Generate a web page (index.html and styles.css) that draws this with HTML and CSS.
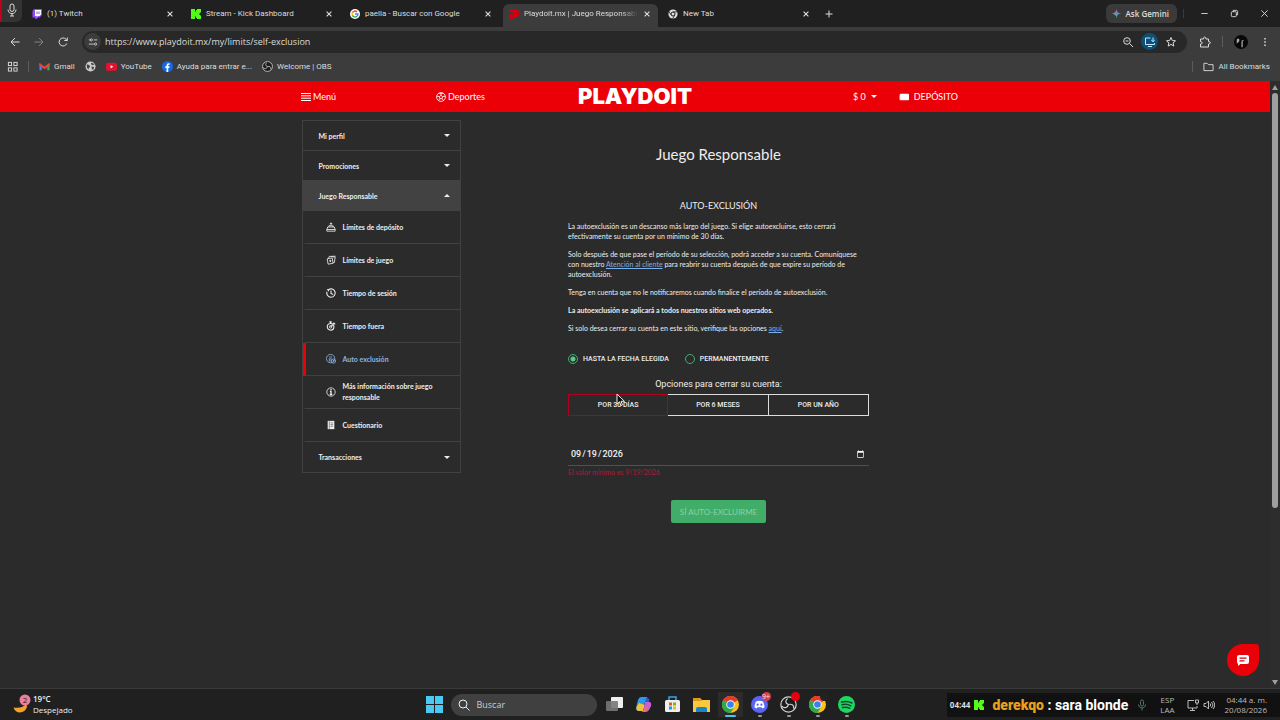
FILE: index.html
```
<!DOCTYPE html>
<html lang="es">
<head>
  <meta charset="UTF-8">
  <meta name="viewport" content="width=device-width, initial-scale=1.0">
  <title>Playdoit.mx | Juego Responsable</title>
  <link rel="stylesheet" href="styles.css">
</head>
<body>

  <!-- Iconos compartidos -->
  <svg class="sprite" aria-hidden="true">
    <symbol id="i-close" viewBox="0 0 10 10"><path d="M2 2l6 6M8 2l-6 6" stroke="currentColor" stroke-width="1.4" fill="none"/></symbol>
    <symbol id="i-kick" viewBox="0 0 10 10"><path d="M0 0h4v2.500h1V1h1V0h4v3.500H9v1H8v1h1v1h1V10H6V9H5V7.500H4V10H0z" fill="#53fc18"/></symbol>
    <symbol id="i-chrome" viewBox="0 0 20 20"><circle cx="10" cy="10" r="10" fill="#fbc116"/><path d="M10 10L1.300 5A10 10 0 0 1 18.700 5z" fill="#e33b2e"/><path d="M10 10L1.300 5A10 10 0 0 0 10 20l4.500-7.500z" fill="#2da94f"/><circle cx="10" cy="10" r="5" fill="#fff"/><circle cx="10" cy="10" r="3.900" fill="#3c80f0"/></symbol>
    <symbol id="i-obs" viewBox="0 0 20 20"><circle cx="10" cy="10" r="9" fill="#1c1c1c" stroke="#d0d0d0" stroke-width="1.500"/><path d="M9 3c-3 2-3 6 1 7 4-1 7 1 6 5M10 10c-1 4-5 5-8 2" fill="none" stroke="#d0d0d0" stroke-width="1.400"/></symbol>
  </svg>

  <header class="browser">
    <div class="tabstrip">
      <button class="tab-search" aria-label="Buscar pestañas">
        <svg viewBox="0 0 12 14"><rect x="4" y="1" width="4" height="7.500" rx="2"/><path d="M2 6.500c0 5.500 8 5.500 8 0M6 10.500v2.500M4 13h4"/></svg>
      </button>
      <div class="tab">
        <svg class="favicon" viewBox="0 0 10 10"><path d="M2 0h8v6L7.500 8.500H6L4.500 10H3V8.500H.500V2z" fill="#9146ff"/><path d="M3 1h6v4.500L7.500 7H6L4.700 8V7H3z" fill="#fff"/><path d="M5 2.500v2.500M7 2.500v2.500" stroke="#9146ff"/></svg>
        <a href="#" class="tab-title">(1) Twitch</a>
        <button class="tab-close" aria-label="Cerrar"><svg><use href="#i-close"/></svg></button>
      </div>
      <div class="tab">
        <svg class="favicon"><use href="#i-kick"/></svg>
        <a href="#" class="tab-title">Stream - Kick Dashboard</a>
        <button class="tab-close" aria-label="Cerrar"><svg><use href="#i-close"/></svg></button>
      </div>
      <div class="tab">
        <svg class="favicon" viewBox="0 0 12 12"><circle cx="6" cy="6" r="6" fill="#fff"/><g fill="none" stroke-width="1.700"><path d="M2.900 4.400A3.500 3.500 0 0 1 8.500 3.500" stroke="#ea4335"/><path d="M2.900 7.600a3.500 3.500 0 0 1 0-3.200" stroke="#fbbc05"/><path d="M8.400 8.600a3.500 3.500 0 0 1-5.500-1" stroke="#34a853"/><path d="M6 6h3.500a3.500 3.500 0 0 1-1.100 2.600" stroke="#4285f4"/></g></svg>
        <a href="#" class="tab-title">paella - Buscar con Google</a>
        <button class="tab-close" aria-label="Cerrar"><svg><use href="#i-close"/></svg></button>
      </div>
      <div class="tab tab-active">
        <svg class="favicon" viewBox="0 0 10 10"><path d="M0 0h7l3 2v4L8 8H5v2H0V4h2v4l1.500-1V3H0z" fill="#d00010"/></svg>
        <a href="#" class="tab-title">Playdoit.mx | Juego Responsabl</a>
        <button class="tab-close" aria-label="Cerrar"><svg><use href="#i-close"/></svg></button>
      </div>
      <div class="tab">
        <svg class="favicon" viewBox="0 0 12 12"><circle cx="6" cy="6" r="5.500" fill="#ddd"/><circle cx="6" cy="6" r="2.400" fill="#ddd" stroke="#222" stroke-width="1.200"/><path d="M6 3.500h5M3.800 7.200L1.200 3M8.200 7.200L5.600 11.500" stroke="#222"/></svg>
        <a href="#" class="tab-title">New Tab</a>
        <button class="tab-close" aria-label="Cerrar"><svg><use href="#i-close"/></svg></button>
      </div>
      <button class="new-tab" aria-label="Nueva pestaña"><svg viewBox="0 0 10 10"><path d="M5 1.500v7M1.500 5h7"/></svg></button>
      <button class="gemini">
        <svg viewBox="0 0 12 12"><path d="M6 0Q6.500 5.500 12 6 6.500 6.500 6 12 5.500 6.500 0 6 5.500 5.500 6 0z" fill="#4a8cf5"/><path d="M6 0Q5.500 5.500 0 6h6z" fill="#f0504a"/><path d="M0 6q5.500.500 6 6V6z" fill="#56b96a"/></svg>
        Ask Gemini
      </button>
      <div class="window-buttons">
        <button aria-label="Minimizar"><svg viewBox="0 0 10 10"><path d="M1.500 5h7"/></svg></button>
        <button aria-label="Restaurar"><svg viewBox="0 0 10 10"><rect x="1.500" y="3" width="5.500" height="5.500" rx="1"/><path d="M3.500 3V1.500H7Q8.500 1.500 8.500 3v3.500H7"/></svg></button>
        <button aria-label="Cerrar ventana"><svg viewBox="0 0 10 10"><path d="M1.500 1.500l7 7M8.500 1.500l-7 7"/></svg></button>
      </div>
    </div>

    <div class="toolbar">
      <div class="nav-buttons">
        <button aria-label="Atrás"><svg viewBox="0 0 12 12"><path d="M10.500 6H2M6 2L2 6l4 4"/></svg></button>
        <button class="dim" aria-label="Adelante"><svg viewBox="0 0 12 12"><path d="M1.500 6H10M6 2l4 4-4 4"/></svg></button>
        <button aria-label="Recargar"><svg viewBox="0 0 12 12"><path d="M9.800 7.500A4 4 0 1 1 9 3.200L10.200 4.500M10.300 1.500v3h-3"/></svg></button>
      </div>
      <div class="urlbar">
        <span class="site-info"><svg viewBox="0 0 12 12"><path d="M1 3.500h2M7 8.500H1M11 3.500H7"/><circle cx="4" cy="3.500" r="1.300"/><circle cx="9" cy="8.500" r="1.300"/></svg></span>
        <input type="text" aria-label="Dirección" value="https://www.playdoit.mx/my/limits/self-exclusion">
        <svg viewBox="0 0 12 12"><circle cx="5" cy="5" r="3.300"/><path d="M7.500 7.500l3.500 3.500M3.500 5h3"/></svg>
        <span class="install"><svg viewBox="0 0 12 12"><path d="M6.500 2H1.500v6.500h9V7M4 10.500h4M9 1.500v4M7.200 4L9 5.700 10.800 4"/></svg></span>
        <svg viewBox="0 0 12 12"><path d="M6 1.500l1.300 3 3.200.300-2.400 2.100.700 3.200L6 8.400l-2.800 1.700.700-3.200L1.500 4.800l3.200-.300z"/></svg>
      </div>
      <div class="toolbar-end">
        <button aria-label="Extensiones"><svg viewBox="0 0 12 12"><path d="M1.500 3H4.500Q4.500 1 5.700 1T7 3H9.500V5.500Q11.300 5.500 11.300 6.700T9.500 8V11H1.500V8Q3.200 8 3.200 6.800T1.500 5.600z"/></svg></button>
        <span class="divider"></span>
        <span class="avatar"><svg viewBox="0 0 14 14"><path d="M8 5h3l-2 1v7H7.500V7zM2 4q2-2 3 0v2L2 9z" fill="#aaa"/></svg></span>
        <button aria-label="Más"><svg viewBox="0 0 12 12"><path d="M6 2v1.500M6 5.300v1.500M6 8.500V10" stroke-width="1.500"/></svg></button>
      </div>
    </div>

    <nav class="bookmarks">
      <a href="#" aria-label="Aplicaciones"><svg viewBox="0 0 12 12"><rect x="1.500" y="1.500" width="3.500" height="3.500"/><rect x="7.500" y="1.500" width="3.500" height="3.500"/><rect x="1.500" y="7.500" width="3.500" height="3.500"/><rect x="7.500" y="7.500" width="3.500" height="3.500"/></svg></a>
      <span class="divider"></span>
      <a href="#"><svg viewBox="0 0 12 12"><path d="M.500 2.500V10H3V5z" fill="#4285f4"/><path d="M11.500 2.500V10H9V5z" fill="#34a853"/><path d="M.500 2L6 6l5.500-4v3L6 9 .500 5z" fill="#ea4335"/></svg>Gmail</a>
      <a href="#" aria-label="Web"><svg viewBox="0 0 12 12"><circle cx="6" cy="6" r="5.500" fill="#ccc"/><path d="M2 3.500l3 1 .5 2-1.500 1v2L2 7zM7 1.500l-.5 2 2 1 2-1M7 6l3 .500-1 3-1.500-.500z" fill="#444"/></svg></a>
      <a href="#"><svg viewBox="0 0 12 12"><rect y="2" width="12" height="8.500" rx="2" fill="#e8112d"/><path d="M5 4.500v3.500l3-1.800z" fill="#fff"/></svg>YouTube</a>
      <a href="#"><svg viewBox="0 0 12 12"><circle cx="6" cy="6" r="6" fill="#1668e3"/><path d="M5 12V7.500H3.600V5.800H5V4.600Q5 2.500 7 2.500h1.300V4H7.500Q6.800 4 6.800 4.800v1h1.500L8 7.500H6.800V12z" fill="#fff"/></svg>Ayuda para entrar e...</a>
      <a href="#"><svg><use href="#i-obs"/></svg>Welcome | OBS</a>
      <span class="divider push"></span>
      <a href="#"><svg viewBox="0 0 12 12"><path d="M1 2.500h3.500L6 4h5v6.500H1z"/></svg>All Bookmarks</a>
    </nav>
  </header>

  <div class="viewport">
    <div class="page">
      <header class="site-header">
        <div class="site-header-inner">
          <nav class="header-left">
            <a href="#"><svg viewBox="0 0 10 10"><path d="M0 1.500h10M0 3.800h10M0 6.200h10M0 8.500h10"/></svg>Menú</a>
            <a href="#"><svg viewBox="0 0 12 12"><circle cx="6" cy="6" r="5.300"/><path d="M6 4l2 1.500-.700 2.500H4.700L4 5.500zM6 4V2L3.500 1.500M6 2l2.500-.500M4 5.500L1 5M8 5.500L11 5M4.700 8L3 10.300M7.300 8L9 10.300"/></svg>Deportes</a>
          </nav>
          <a href="#" class="logo">PLAYDOIT</a>
          <div class="header-right">
            <button>$ 0 <span class="caret"></span></button>
            <a href="#"><svg viewBox="0 0 12 12"><rect x="1" y="2" width="11" height="8" rx="1" fill="#fff"/><path d="M1 4v5" stroke="#ffb0b0"/></svg>DEPÓSITO</a>
          </div>
        </div>
      </header>

      <div class="content">
        <nav class="sidebar">
          <button class="group">Mi perfil <span class="caret"></span></button>
          <button class="group">Promociones <span class="caret"></span></button>
          <button class="group group-open">Juego Responsable <span class="caret caret-up"></span></button>
          <a href="#"><svg viewBox="0 0 12 12"><path d="M1 9l1-3h8l1 3v2H1zM1 9h10M3.500 6V4.500h5V6M6 1v3M4.500 2.500L6 1l1.500 1.500"/></svg>Límites de depósito</a>
          <a href="#"><svg viewBox="0 0 12 12"><path d="M1.500 4.500l6-1 1 6.500-6 1zM3 4l1-2.500 7 1-1 6.500H8.500M6.500 1.500h5"/><path d="M5 5.500L6.500 7 5.300 8.800 3.800 7.300z" fill="currentColor"/></svg>Límites de juego</a>
          <a href="#"><svg viewBox="0 0 12 12"><path d="M3 2A5 5 0 1 1 1.200 4.500M3 2H1M3 2v2M6 3v3.500l2.500 1.200" stroke-width="1.300"/></svg>Tiempo de sesión</a>
          <a href="#"><svg viewBox="0 0 12 12"><circle cx="5.500" cy="7" r="4" stroke-width="1.300"/><circle cx="5.500" cy="7" r="1.500"/><path d="M5.500 7L8 4.500M4 1h3M5.500 1v2M9 2l2 2M8.500 3.500l1-1" stroke-width="1.300"/></svg>Tiempo fuera</a>
          <a href="#" class="current"><svg viewBox="0 0 12 12"><circle cx="5.500" cy="5.500" r="5"/><path d="M4 9V5M4 3v1M6 2.500V9"/><circle cx="9" cy="8.500" r="2.500"/><path d="M9 7.200v1.300h1.200"/></svg>Auto exclusión</a>
          <a href="#"><svg viewBox="0 0 12 12"><circle cx="6" cy="6" r="5"/><path d="M6 2.500v1.300M4.700 5.200H6v3.600M4.500 9h3" stroke-width="1.600"/></svg>Más información sobre juego responsable</a>
          <a href="#"><svg viewBox="0 0 12 12"><path d="M2 1h8v10H2z" fill="currentColor"/><path d="M4 1.500v9M5.500 3.500h3M5.500 5.500h3M5.500 7.500h3" stroke="#2b2b2b" stroke-width=".6"/></svg>Cuestionario</a>
          <button class="group">Transacciones <span class="caret"></span></button>
        </nav>

        <main class="main">
          <h1>Juego Responsable</h1>
          <section class="exclusion">
            <h2>AUTO-EXCLUSIÓN</h2>
            <p>La autoexclusión es un descanso más largo del juego. Si elige autoexcluirse, esto cerrará<br>efectivamente su cuenta por un mínimo de 30 días.</p>
            <p>Solo después de que pase el período de su selección, podrá acceder a su cuenta. Comuníquese<br>con nuestro <a href="#">Atención al cliente</a> para reabrir su cuenta después de que expire su período de<br>autoexclusión.</p>
            <p>Tenga en cuenta que no le notificaremos cuando finalice el período de autoexclusión.</p>
            <p><strong>La autoexclusión se aplicará a todos nuestros sitios web operados.</strong></p>
            <p>Si solo desea cerrar su cuenta en este sitio, verifique las opciones <a href="#">aquí</a>.</p>

            <form>
              <div class="radios">
                <label><input type="radio" name="tipo" checked>HASTA LA FECHA ELEGIDA</label>
                <label><input type="radio" name="tipo">PERMANENTEMENTE</label>
              </div>
              <label class="options-label" for="fecha">Opciones para cerrar su cuenta:</label>
              <div class="options">
                <button type="button" class="selected">POR 30 DÍAS
                  <svg class="cursor" viewBox="0 0 10 14"><path d="M1 1v10l2.500-2.200L5 12.500l1.500-.700L5 8.300h3.500z" fill="#111" stroke="#eee"/></svg>
                </button>
                <button type="button">POR 6 MESES</button>
                <button type="button">POR UN AÑO</button>
              </div>
              <input type="date" id="fecha" value="2026-09-19">
              <div class="error">El valor mínimo es 9/19/2026</div>
              <button type="button" class="submit">SÍ AUTO-EXCLUIRME</button>
            </form>
          </section>
        </main>
      </div>

      <button class="chat" aria-label="Chat"><svg viewBox="0 0 14 12"><rect x="1" y="1" width="12" height="9" rx="2" fill="#fff"/><path d="M2 8v4l3-2.500z" fill="#fff"/><path d="M3.500 4.200h7M3.500 6.800h5" stroke="#d00010" stroke-width="1.200"/></svg></button>
    </div>

    <div class="scrollbar">
      <span class="arrow arrow-up"></span>
      <div class="track"><div class="thumb"></div></div>
      <span class="arrow"></span>
    </div>
  </div>

  <footer class="taskbar">
    <div class="weather">
      <svg viewBox="0 0 18 20"><path d="M13 9.500c-2 4-7 5-12.500 4 2 7 12 6.500 13.500-1z" fill="#f5a130"/><circle cx="12" cy="6" r="5.500" fill="#ec7f98"/><text x="12" y="9" text-anchor="middle">2</text></svg>
      <div><b>19°C</b><br>Despejado</div>
    </div>

    <div class="apps">
      <svg viewBox="0 0 17 17" role="img" aria-label="Inicio"><path d="M0 0h8v8H0zM9 0h8v8H9zM0 9h8v8H0zM9 9h8v8H9z" fill="#4cc8f5"/></svg>
      <label class="search"><svg viewBox="0 0 12 12"><circle cx="5" cy="5" r="4"/><path d="M8 8l3.500 3.500"/></svg><input type="text" placeholder="Buscar" aria-label="Buscar"></label>
      <svg viewBox="0 0 17 17"><rect x="5" y="1" width="12" height="11" rx="1" fill="#eee"/><rect x="0" y="5" width="12" height="10" rx="1" fill="#777" fill-opacity=".9"/></svg>
      <svg viewBox="0 0 17 17"><path d="M6 1h6l2 5h-4L7 15H4Q1 15 1 12L3 4Q4 1 6 1z" fill="#2b9be8"/><path d="M4 7L1.500 11Q1 15 4 15h4l2-6z" fill="#f0c23c"/><path d="M11 2h2q2 1 1 4h-4l1-4z" fill="#3257d8"/><path d="M10 6h4q3 0 2 4l-2 4q-1 2-4 2H6q2 0 3-4z" fill="#c95fd0"/><path d="M13 10l-2 6H7q2-1 3-4z" fill="#f0705a"/></svg>
      <svg viewBox="0 0 17 17"><path d="M5 4V1h7v3" fill="none" stroke="#35a5e5" stroke-width="1.500"/><rect x="1" y="4" width="15" height="12" rx="1.500" fill="#eee"/><path d="M5 6.500h3v3H5z" fill="#f25022"/><path d="M9 6.500h3v3H9z" fill="#7fba00"/><path d="M5 10.500h3v3H5z" fill="#00a4ef"/><path d="M9 10.500h3v3H9z" fill="#ffb900"/></svg>
      <svg viewBox="0 0 17 17"><path d="M0 2h7l2 2h8v12H0z" fill="#fbc93d"/><path d="M0 2h7l2 3H0z" fill="#d99a1d"/><path d="M3 16v-3q0-2 2-2h7q2 0 2 2v3z" fill="#1b84c9"/></svg>
      <span class="app app-active"><svg><use href="#i-chrome"/></svg></span>
      <span class="app"><svg viewBox="0 0 17 17"><circle cx="8.500" cy="8.500" r="8.500" fill="#5865f2"/><path d="M5 5.500q3.500-1.500 7 0 1.500 3 1.500 6l-2.200 1-.800-1.200h-4L5.700 12.500l-2.200-1q0-3 1.500-6z" fill="#fff"/><circle cx="6.600" cy="8.700" r="1.100" fill="#5865f2"/><circle cx="10.400" cy="8.700" r="1.100" fill="#5865f2"/></svg><span class="badge">9+</span></span>
      <span class="app"><svg><use href="#i-obs"/></svg><span class="badge badge-dot"></span></span>
      <span class="app"><svg><use href="#i-chrome"/></svg><span class="badge badge-user"></span></span>
      <span class="app"><svg viewBox="0 0 17 17"><circle cx="8.500" cy="8.500" r="8.500" fill="#1ed760"/><path d="M3.500 6q5.500-1.500 10.500 1M4 8.800q4.500-1.300 8.800 1M4.500 11.500q4-1 7.300.800" fill="none" stroke="#143" stroke-width="1.500" stroke-linecap="round"/></svg></span>
    </div>

    <div class="tray">
      <span class="chat-time">04:44</span>
      <svg class="kick"><use href="#i-kick"/></svg>
      <span class="chat-line"><b>derekqo</b> : sara blonde</span>
      <svg class="mic" viewBox="0 0 12 12"><rect x="4.500" y="1" width="3" height="6" rx="1.500"/><path d="M2.500 5.500c0 4.500 7 4.500 7 0M6 9v2.500"/></svg>
      <span class="lang">ESP<br>LAA</span>
      <svg viewBox="0 0 12 12"><path d="M7 1.500H1v7.500h9V7M3 11.500h5M5.500 9v2.500M8.500 1h3v3h-3zM10 4v2"/></svg>
      <svg viewBox="0 0 12 12"><path d="M1 4.500v3h2L5.500 10V2L3 4.500zM7 4.500q1.500 1.500 0 3M8.500 3q3 3 0 6M10 2q3.500 4 0 8"/></svg>
      <span class="clock">04:44 a. m.<br>20/08/2026</span>
    </div>
  </footer>

</body>
</html>
```

FILE: styles.css
```
* {
  box-sizing: border-box;
}

body {
  margin: 0;
  height: 100vh;
  display: flex;
  flex-direction: column;
  background-color: #2b2b2b;
  color: #eee;
  font-family: "Open Sans", sans-serif;
  font-size: 8px;
  overflow: hidden;
}

button, input {
  font: inherit;
  color: inherit;
  background: none;
  border: none;
  padding: 0;
  margin: 0;
}

a {
  color: inherit;
  text-decoration: none;
}

svg {
  width: 12px;
  height: 12px;
  flex: none;
  fill: none;
  stroke: currentColor;
  stroke-width: 1;
}

svg path[fill]:not([stroke]),
svg rect[fill]:not([stroke]),
svg circle[fill]:not([stroke]),
svg text {
  stroke: none;
}

.sprite {
  display: none;
}

/* Navegador */
.browser {
  background-color: #3c3c3c;
  color: #dcdcdc;
  font-family: "Roboto", sans-serif;
}

.tabstrip {
  display: flex;
  align-items: center;
  height: 27px;
  background-color: #202020;
}

.tab-search {
  align-self: stretch;
  width: 22px;
  margin-right: 4px;
  margin-bottom: 5px;
  border-left: 2px solid #c00018;
  border-radius: 0 0 6px 0;
  background-color: #333;
}

.tab-search svg {
  width: 14px;
  height: 14px;
}

.tab {
  display: flex;
  align-items: center;
  width: 159px;
  padding: 0 11px 0 6px;
  gap: 5px;
}

.favicon {
  width: 10px;
  height: 10px;
}

.tab-title {
  flex: 1;
  overflow: hidden;
  white-space: nowrap;
}

.tab-close svg {
  display: block;
  width: 8px;
  height: 8px;
}

.tab-active {
  align-self: flex-end;
  width: 155px;
  height: 23px;
  margin-right: 4px;
  padding-right: 7px;
  padding-bottom: 4px;
  border-radius: 6px 6px 0 0;
  background-color: #3c3c3c;
}

.tab-active .tab-title {
  mask-image: linear-gradient(to right, #000 85%, transparent);
}

.new-tab {
  margin-left: 3px;
}

.new-tab svg {
  display: block;
  width: 10px;
  height: 10px;
}

.gemini {
  display: flex;
  align-items: center;
  gap: 5px;
  height: 19px;
  margin-left: auto;
  padding: 0 8px 0 6px;
  border-radius: 6px;
  background-color: #3a3a3a;
  font-family: "Open Sans", sans-serif;
  font-weight: 600;
}

.gemini svg {
  width: 9px;
  height: 9px;
}

.window-buttons {
  display: flex;
  gap: 21px;
  margin-left: 6px;
  padding: 0 11px 0 16px;
  border-left: 1px solid #3a3a3a;
}

.window-buttons svg {
  display: block;
  width: 9px;
  height: 9px;
}

.toolbar {
  display: flex;
  align-items: center;
  height: 29px;
  padding: 0 9px;
}

.nav-buttons {
  display: flex;
  gap: 12px;
  width: 73px;
}

.toolbar svg {
  display: block;
}

.dim {
  color: #808080;
}

.urlbar {
  flex: 1;
  display: flex;
  align-items: center;
  gap: 7px;
  height: 22px;
  padding: 0 10px 0 2px;
  border-radius: 11px;
  background-color: #282828;
}

.urlbar input {
  flex: 1;
  margin-left: -3px;
  font-family: "Open Sans", sans-serif;
  font-size: 9px;
  outline: none;
}

.site-info, .install, .avatar {
  display: flex;
  align-items: center;
  justify-content: center;
  width: 17px;
  height: 17px;
  border-radius: 50%;
  background-color: #3c3c3c;
}

.site-info svg {
  width: 10px;
  height: 10px;
}

.install {
  background-color: #0c5078;
  color: #c2e7ff;
}

.toolbar-end {
  display: flex;
  align-items: center;
  gap: 11px;
  padding-left: 12px;
}

.avatar {
  width: 14px;
  height: 14px;
  background-color: #080808;
}

.divider {
  width: 1px;
  height: 11px;
  background-color: #5c5c5c;
}

.bookmarks {
  display: flex;
  align-items: center;
  gap: 10px;
  height: 25px;
  padding: 0 10px 5px 7px;
}

.bookmarks a {
  display: flex;
  align-items: center;
  gap: 4px;
}

.bookmarks svg {
  width: 11px;
  height: 11px;
}

.push {
  margin-left: auto;
}

/* Página */
.viewport {
  flex: 1;
  display: flex;
  min-height: 0;
}

.page {
  flex: 1;
  position: relative;
  font-family: "Lato", sans-serif;
}

.site-header {
  background-color: #ec0008;
  color: #fff;
  font-size: 9px;
}

.site-header-inner {
  display: grid;
  grid-template-columns: 1fr auto 1fr;
  align-items: center;
  max-width: 668px;
  height: 31px;
  margin: 0 auto;
}

.header-left, .header-right, .site-header a, .site-header button {
  display: flex;
  align-items: center;
}

.header-left {
  gap: 100px;
}

.header-left a {
  gap: 2px;
}

.header-left svg, .header-right svg {
  width: 10px;
  height: 10px;
}

.header-right {
  justify-content: flex-end;
  gap: 22px;
  padding-right: 11px;
}

.header-right a, .header-right button {
  gap: 5px;
}

.site-header .logo {
  font-family: "Inter", sans-serif;
  font-size: 22px;
  font-weight: 900;
  line-height: 31px;
}

.caret {
  border: 3px solid transparent;
  border-top-color: currentColor;
  border-bottom: none;
}

.caret-up {
  border-top: none;
  border-bottom: 3px solid currentColor;
}

.content {
  display: grid;
  grid-template-columns: 159px 1fr;
  gap: 8px;
  align-items: start;
  max-width: 667px;
  margin: 0 auto;
  padding-top: 8px;
}

.sidebar {
  border: 1px solid #414141;
  font-size: 7px;
  font-weight: bold;
}

.sidebar .group {
  display: flex;
  align-items: center;
  justify-content: space-between;
  width: 100%;
  height: 30px;
  padding: 0 10px 0 16px;
  border-bottom: 1px solid #414141;
}

.sidebar .group:last-child {
  border-bottom: none;
}

.sidebar .group-open {
  background-color: #424242;
}

.sidebar a {
  display: flex;
  align-items: center;
  gap: 7px;
  height: 33px;
  padding: 0 16px 0 20px;
  border-left: 3px solid transparent;
  border-bottom: 1px solid #414141;
  line-height: 11px;
}

.sidebar svg {
  width: 10px;
  height: 10px;
}

.sidebar .current {
  border-left-color: #ec0008;
  color: #8ab4e8;
}

.main {
  padding-top: 24px;
}

h1, h2, p {
  margin: 0;
}

h1 {
  font-size: 15px;
  font-weight: normal;
  line-height: 20px;
  text-align: center;
}

.exclusion {
  max-width: 301px;
  margin: 35px auto 0;
}

h2 {
  margin-bottom: 8px;
  font-size: 9px;
  font-weight: normal;
  line-height: 14px;
  text-align: center;
}

p {
  margin-bottom: 8px;
  font-size: 7px;
  line-height: 10px;
  white-space: nowrap;
}

p a {
  color: #7eb0e8;
  text-decoration: underline;
}

form {
  padding-top: 13px;
  font-family: "Roboto", sans-serif;
  text-align: center;
}

.radios {
  display: flex;
  gap: 16px;
  font-size: 7px;
  font-weight: 500;
}

.radios label {
  display: flex;
  align-items: center;
  gap: 5px;
}

.radios input {
  appearance: none;
  width: 10px;
  height: 10px;
  border: 1px solid #3fb06e;
  border-radius: 50%;
}

.radios input:checked {
  background: radial-gradient(#5cc98a 0 2px, transparent 3px);
}

.options-label {
  display: block;
  margin: 15px 0 4px;
  font-size: 9px;
  line-height: 11px;
}

.options {
  display: grid;
  grid-template-columns: repeat(3, 1fr);
}

.options button {
  position: relative;
  height: 22px;
  border: 1px solid #ddd;
  border-left: none;
  font-size: 7px;
  font-weight: 500;
}

.options .selected {
  border: 1px solid #b00020;
}

.cursor {
  position: absolute;
  left: 47px;
  top: -2px;
  width: 10px;
  height: 14px;
}

input[type="date"] {
  display: block;
  width: 100%;
  height: 23px;
  margin-top: 27px;
  padding: 0 2px;
  border-bottom: 1px solid #c4183f;
  font-size: 9px;
  font-weight: 500;
  color-scheme: dark;
}

.error {
  margin-top: 2px;
  color: #b0183c;
  font-family: "Lato", sans-serif;
  font-size: 7px;
  line-height: 8px;
  text-align: left;
}

.submit {
  height: 23px;
  margin-top: 24px;
  padding: 0 9px;
  border-radius: 2px;
  background-color: #40ad69;
  color: #8fcfa8;
  font-family: "Lato", sans-serif;
  font-size: 8px;
}

.chat {
  position: absolute;
  right: 11px;
  bottom: 12px;
  width: 32px;
  height: 32px;
  border-radius: 50% 3px 50% 50%;
  background-color: #ea0008;
}

.chat svg {
  display: block;
  width: 14px;
  margin: 0 auto;
}

.scrollbar {
  display: flex;
  flex-direction: column;
  align-items: center;
  gap: 3px;
  width: 10px;
  padding: 4px 0 3px;
  background-color: #2d2d2d;
}

.track {
  flex: 1;
  width: 6px;
}

.thumb {
  height: 71%;
  border-radius: 3px;
  background-color: #9f9f9f;
}

.arrow {
  border: 3px solid transparent;
  border-top: 5px solid #9f9f9f;
  border-bottom: none;
}

.arrow-up {
  border-top: none;
  border-bottom: 5px solid #9f9f9f;
}

/* Barra de tareas */
.taskbar {
  display: grid;
  grid-template-columns: 1fr auto 1fr;
  align-items: center;
  height: 32px;
  border-top: 1px solid #3a3a3a;
  background-color: #202020;
}

.weather {
  display: flex;
  align-items: center;
  gap: 2px;
  padding: 0 0 2px 13px;
  line-height: 11px;
}

.weather svg {
  width: 18px;
  height: 22px;
}

.weather text {
  fill: #401020;
  font-size: 8px;
}

.weather b {
  font-weight: 600;
}

.apps {
  display: flex;
  align-items: center;
  gap: 12px;
}

.apps > svg, .app svg {
  display: block;
  width: 17px;
  height: 17px;
}

.search {
  display: flex;
  align-items: center;
  gap: 7px;
  width: 146px;
  height: 22px;
  margin: 0 -3px 0 -4px;
  padding: 0 7px;
  border-radius: 11px;
  background-color: #404040;
  font-size: 9px;
}

.search input {
  width: 100%;
}

.search input::placeholder {
  color: #ccc;
}

.app {
  position: relative;
}

.app::after {
  content: "";
  position: absolute;
  left: 7px;
  bottom: -4px;
  width: 4px;
  height: 2px;
  border-radius: 1px;
  background-color: #999;
}

.app-active {
  box-shadow: 0 0 0 4px #2b2b2b;
  background-color: #2b2b2b;
}

.app-active::after {
  left: 3px;
  width: 11px;
  background-color: #4cc2f0;
}

.badge {
  position: absolute;
  right: -3px;
  top: -4px;
  width: 9px;
  height: 9px;
  border-radius: 50%;
  background-color: #d83c4c;
  font-size: 7px;
  line-height: 9px;
  text-align: center;
}

.badge-dot {
  background-color: #e80010;
}

.badge-user {
  background-color: #222;
}

.tray {
  justify-self: end;
  display: flex;
  align-items: center;
  gap: 4px;
  height: 24px;
  padding: 0 13px 0 3px;
  background-color: #111;
  color: #bbb;
  line-height: 10px;
  white-space: nowrap;
}

.chat-time {
  color: #ddd;
  font-weight: bold;
}

.kick {
  width: 10px;
  height: 10px;
}

.chat-line {
  margin: 0 4px;
  color: #fff;
  font-family: "Roboto", sans-serif;
  font-size: 14px;
  font-weight: bold;
  line-height: 20px;
}

.chat-line b {
  color: #e8a020;
}

.mic {
  color: #50786c;
}

.lang {
  margin: 0 8px;
  text-align: center;
}

.clock {
  margin-left: 6px;
  text-align: right;
}
```
